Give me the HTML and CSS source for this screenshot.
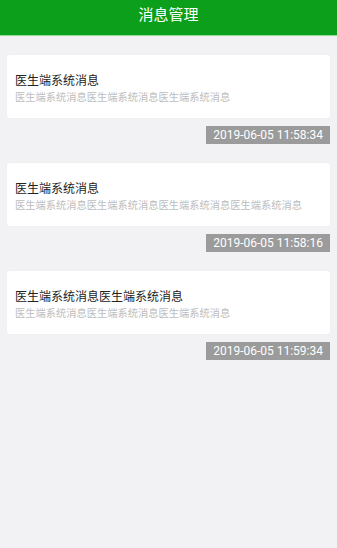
FILE: index.html
```html
<!DOCTYPE html>
<html lang="zh">
<head>
<meta charset="utf-8">
<title>消息管理</title>
<link rel="stylesheet" href="styles.css">
</head>
<body>
<header class="topbar">消息管理</header>
<main class="list">
  <section class="item">
    <div class="card">
      <div class="title">医生端系统消息</div>
      <div class="desc">医生端系统消息医生端系统消息医生端系统消息</div>
    </div>
    <div class="time-row"><span class="time">2019-06-05 11:58:34</span></div>
  </section>
  <section class="item">
    <div class="card">
      <div class="title">医生端系统消息</div>
      <div class="desc">医生端系统消息医生端系统消息医生端系统消息医生端系统消息</div>
    </div>
    <div class="time-row"><span class="time">2019-06-05 11:58:16</span></div>
  </section>
  <section class="item">
    <div class="card">
      <div class="title">医生端系统消息医生端系统消息</div>
      <div class="desc">医生端系统消息医生端系统消息医生端系统消息</div>
    </div>
    <div class="time-row"><span class="time">2019-06-05 11:59:34</span></div>
  </section>
</main>
</body>
</html>
```
FILE: styles.css
```css
html, body {
  margin: 0;
  padding: 0;
  background: #f2f2f4;
  font-family: Roboto, "Noto Sans CJK SC", sans-serif;
}
.topbar {
  height: 35px;
  line-height: 31px;
  background: #0b9f1b;
  border-bottom: 1px solid #8fdc96;
  color: #fff;
  text-align: center;
  font-size: 15px;
}
.list {
  display: flex;
  flex-direction: column;
  gap: 19px;
  padding: 19px 7px 0;
}
.item {
  display: flex;
  flex-direction: column;
  gap: 8px;
}
.card {
  background: #fff;
  border-radius: 3px;
  box-shadow: 0 0 2px rgba(0,0,0,0.04);
  padding: 18px 8px 13px;
  height: 63px;
  box-sizing: border-box;
}
.title {
  font-size: 12px;
  line-height: 16px;
  color: #222;
  font-weight: 400;
}
.desc {
  margin-top: 2px;
  font-size: 10.25px;
  line-height: 14px;
  color: #bdbdbd;
  white-space: nowrap;
}
.time-row {
  display: flex;
  justify-content: flex-end;
}
.time {
  background: #9b9b9b;
  color: #fff;
  font-size: 12px;
  line-height: 18px;
  height: 18px;
  padding: 0 7px;
}
```
